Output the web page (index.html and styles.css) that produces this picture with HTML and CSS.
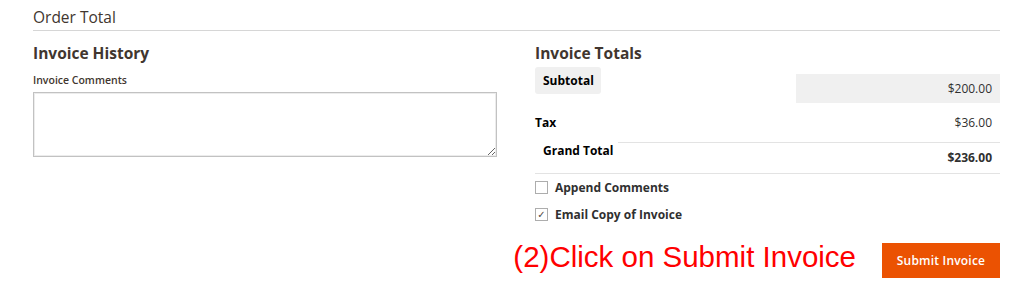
FILE: index.html
```html
<!DOCTYPE html>
<html>
  <head>
    <meta charset="utf-8">
    <title>Invoice</title>
    <link rel="stylesheet" href="styles.css">
  </head>
  <body>
    <div class="section-title">Order Total</div>

    <div class="cols">
      <div class="col-history">
        <h3>Invoice History</h3>
        <label class="field-label" for="comment">Invoice Comments</label>
        <textarea id="comment" class="comment"></textarea>
      </div>

      <div class="col-totals">
        <h3>Invoice Totals</h3>
        <div class="row row-sub">
          <span class="lbl lbl-sub">Subtotal</span>
          <span class="val val-sub">$200.00</span>
        </div>
        <div class="row row-tax">
          <span class="lbl">Tax</span>
          <span class="val">$36.00</span>
        </div>
        <div class="row row-grand">
          <span class="lbl lbl-grand">Grand Total</span>
          <span class="val val-grand">$236.00</span>
        </div>

        <div class="checks">
          <label class="check"><span class="box"></span>Append Comments</label>
          <label class="check"><span class="box on">&#10003;</span>Email Copy of Invoice</label>
        </div>
      </div>
    </div>

    <div class="actions">
      <span class="note">(2)Click on Submit Invoice</span>
      <button class="submit">Submit Invoice</button>
    </div>
  </body>
</html>
```

FILE: styles.css
```css
body {
  margin: 0;
  padding: 0 24px 0 33px;
  background: #fff;
  font-family: "Open Sans", "DejaVu Sans", sans-serif;
  color: #41362f; }
.section-title {
  font-size: 15.5px;
  line-height: 20px;
  padding-top: 7px;
  padding-bottom: 3px;
  border-bottom: 1px solid #d6d6d6; }
.cols {
  display: flex;
  gap: 38px; }
.col-history {
  width: 464px; }
.col-totals {
  flex: 1; }
h3 {
  font-size: 15.5px;
  font-weight: 700;
  line-height: 20px;
  margin: 12px 0 0 0; }
.field-label {
  display: block;
  font-size: 10.5px;
  font-weight: 600;
  line-height: 14px;
  margin-top: 10px; }
.comment {
  display: block;
  box-sizing: border-box;
  width: 464px;
  height: 65px;
  margin-top: 5px;
  border: 1px solid #c2c2c2;
  box-shadow: inset 0 0 0 1px #ececec; }
.row {
  display: flex;
  justify-content: space-between;
  font-size: 12px;
  line-height: 16px;
  color: #303030; }
.lbl {
  font-weight: 700;
  color: #000; }
.val {
  padding-right: 8px; }
.row-sub {
  margin-top: 4px;
  height: 36px; }
.lbl-sub {
  background: #f0f0f0;
  border-radius: 3px;
  width: 66px;
  height: 27px;
  box-sizing: border-box;
  line-height: 28px;
  padding-left: 8px; }
.val-sub {
  align-self: flex-end;
  background: #f0f0f0;
  width: 204px;
  height: 29px;
  box-sizing: border-box;
  line-height: 29px;
  text-align: right; }
.row-tax {
  height: 39px;
  align-items: center; }
.row-grand {
  position: relative;
  height: 31px;
  border-bottom: 1px solid #e3e3e3; }
.row-grand::before {
  content: "";
  position: absolute;
  left: 83px;
  right: 0;
  top: 0;
  border-top: 1px solid #e3e3e3; }
.lbl-grand {
  padding: 1px 0 0 8px; }
.val-grand {
  font-weight: 700;
  align-self: flex-end;
  padding-bottom: 7px; }
.checks {
  display: flex;
  flex-direction: column;
  gap: 11px;
  margin-top: 5px; }
.check {
  display: flex;
  align-items: center;
  gap: 7px;
  height: 16px;
  font-size: 12px;
  font-weight: 700;
  color: #303030; }
.box {
  width: 11px;
  height: 11px;
  border: 1px solid #adadad;
  background: #fff;
  font-size: 10px;
  line-height: 11px;
  text-align: center;
  color: #514943; }
.actions {
  display: flex;
  justify-content: flex-end;
  align-items: flex-start;
  gap: 26px;
  margin-top: 21px; }
.note {
  font-family: "Liberation Sans", Arial, sans-serif;
  font-size: 29.5px;
  margin-top: -3px;
  color: #ff0000; }
.submit {
  background: #eb5202;
  border: 1px solid #eb5202;
  color: #fff;
  font-family: "Open Sans", sans-serif;
  font-size: 12px;
  font-weight: 600;
  letter-spacing: 0.2px;
  width: 118px;
  height: 35px; }
```
